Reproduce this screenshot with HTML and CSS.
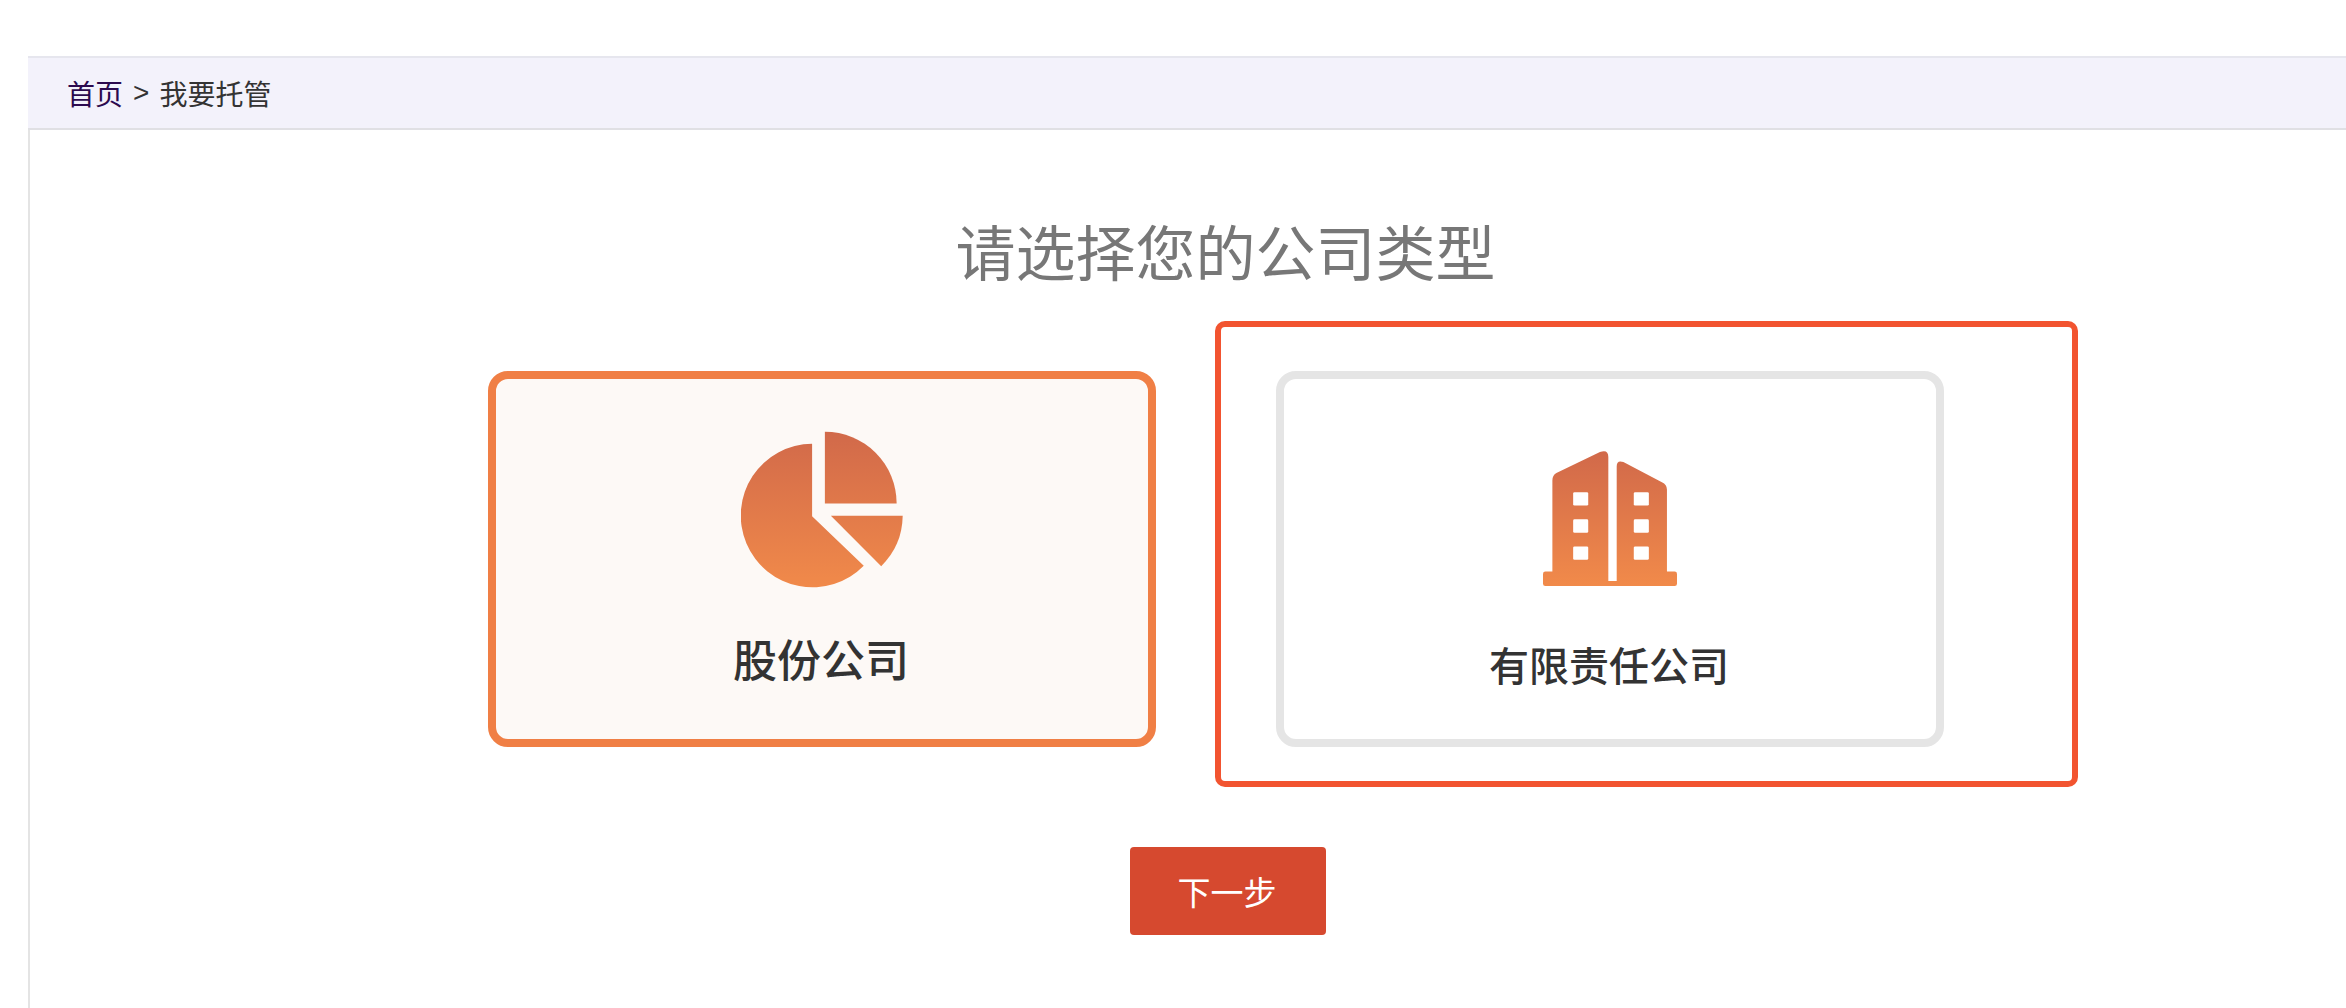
FILE: index.html
```html
<!DOCTYPE html>
<html lang="zh-CN">
<head>
    <meta charset="UTF-8">
    <title>我要托管</title>
    <link rel="stylesheet" href="styles.css">
</head>
<body>
    <div class="main">
        <div class="breadcrumb">
            <a class="crumb-link" href="#">首页</a><span class="crumb-sep">&gt;</span><span>我要托管</span>
        </div>

        <h1 class="title">请选择您的公司类型</h1>

        <div class="type-row">
            <div class="type-card type-card-active">
                <svg class="icon-pie" viewBox="65 30 481 468">
                    <defs>
                        <linearGradient id="pieFill" gradientUnits="userSpaceOnUse" x1="0" y1="30" x2="0" y2="498">
                            <stop offset="0" stop-color="#d1694a"/>
                            <stop offset="1" stop-color="#f18a4a"/>
                        </linearGradient>
                    </defs>
                    <path fill="url(#pieFill)" d="M276 68V284L430 432A214 214 0 1 1 276 68Z"/>
                    <path fill="url(#pieFill)" d="M314 32V246H528A214 214 0 0 0 314 32Z"/>
                    <path fill="url(#pieFill)" d="M332 283H546A214 214 0 0 1 482 433Z"/>
                </svg>
                <div class="type-name">股份公司</div>
            </div>

            <div class="type-frame">
                <div class="type-card type-card-plain">
                    <svg class="icon-building" viewBox="70 32 400 403">
                        <defs>
                            <linearGradient id="buildingFill" gradientUnits="userSpaceOnUse" x1="0" y1="32" x2="0" y2="435">
                                <stop offset="0" stop-color="#d1694a"/>
                                <stop offset="1" stop-color="#f18a4a"/>
                            </linearGradient>
                        </defs>
                        <path fill="url(#buildingFill)" d="M98 392V120Q98 105 110 98L240 35Q265 26 265 50V420H290V78Q290 58 310 65L425 125Q440 132 440 147V392H463Q470 392 470 399V428Q470 435 463 435H77Q70 435 70 428V399Q70 392 77 392Z"/>
                        <rect class="window" x="160" y="155" width="45" height="40" rx="4"/>
                        <rect class="window" x="160" y="236" width="45" height="40" rx="4"/>
                        <rect class="window" x="160" y="317" width="45" height="40" rx="4"/>
                        <rect class="window" x="341" y="155" width="45" height="40" rx="4"/>
                        <rect class="window" x="341" y="236" width="45" height="40" rx="4"/>
                        <rect class="window" x="341" y="317" width="45" height="40" rx="4"/>
                    </svg>
                    <div class="type-name">有限责任公司</div>
                </div>
            </div>
        </div>

        <button class="next-btn">下一步</button>
    </div>
</body>
</html>
```

FILE: styles.css
```css
body {
    margin: 0;
    padding: 56px 0 0 28px;
    height: 952px;
    overflow: hidden;
    background: #fff;
    font-family: "Liberation Sans", "Noto Sans CJK SC", sans-serif;
    color: #333;
}

.main {
    height: 100%;
    border-left: 2px solid #e4e4e4;
}

/* Breadcrumb */
.breadcrumb {
    display: flex;
    align-items: center;
    height: 70px;
    margin-left: -2px;
    padding-left: 39px;
    background: #f3f2fb;
    border-top: 2px solid #e6e6ee;
    border-bottom: 2px solid #e0e0e4;
    font-size: 28px;
    color: #333;
}

.crumb-link {
    color: #2c0a4f;
    text-decoration: none;
}

.crumb-sep {
    margin: 0 10px 0 10px;
}

.title {
    margin: 0;
    padding: 84px 0 0 75px;
    height: 107px;
    line-height: 84px;
    text-align: center;
    font-size: 60px;
    font-weight: normal;
    color: #777;
}

/* Company type cards */
.type-row {
    display: flex;
    align-items: flex-start;
    padding-left: 458px;
}

.type-card {
    box-sizing: border-box;
    display: flex;
    flex-direction: column;
    align-items: center;
    width: 668px;
    height: 376px;
    border: 8px solid #e5e5e5;
    border-radius: 20px;
    background: #fff;
}

.type-card-active {
    margin-top: 50px;
    padding-top: 52px;
    border-color: #f07f45;
    background: #fdf9f6;
}

.type-card-plain {
    padding-top: 72px;
}

.type-frame {
    box-sizing: border-box;
    width: 863px;
    height: 466px;
    margin-left: 59px;
    padding: 44px 0 0 55px;
    border: 6px solid #f25430;
    border-radius: 10px;
}

.icon-pie {
    display: block;
    width: 162px;
    height: 157px;
}

.icon-building {
    display: block;
    width: 134px;
    height: 135px;
}

.window {
    fill: #fff;
}

.type-name {
    height: 60px;
    line-height: 60px;
    font-weight: 500;
    white-space: nowrap;
}

.type-card-active .type-name {
    margin-top: 44px;
    margin-right: 2px;
    font-size: 44px;
}

.type-card-plain .type-name {
    margin-top: 51px;
    margin-right: 2px;
    font-size: 40px;
}

.next-btn {
    display: block;
    width: 196px;
    height: 88px;
    margin: 60px 0 0 1100px;
    padding: 0 2px 0 0;
    border: none;
    border-radius: 4px;
    background: #d6492f;
    color: #fff;
    font-family: inherit;
    font-size: 33px;
}
```
